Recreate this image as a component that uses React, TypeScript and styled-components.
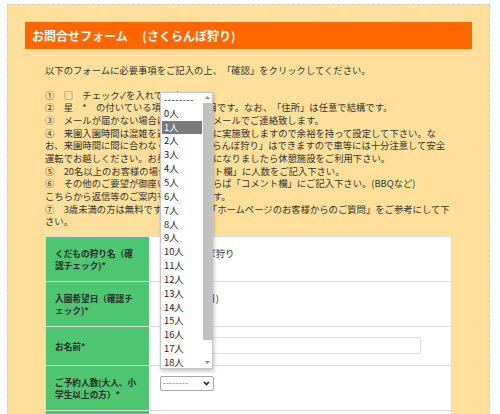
import React from 'react';
import styled, { createGlobalStyle } from 'styled-components';

const GlobalStyle = createGlobalStyle`
  html, body {
    margin: 0;
    padding: 0;
    background: #fff;
  }
  body {
    font-family: "Noto Sans CJK JP", "Noto Sans", sans-serif;
    color: #333;
  }
`;

const Frame = styled.div`
  margin: 4px 10px 0 7px;
  border: 1px dashed #cfcfcf;
  background: #ffe09b;
  padding: 17px 17px 40px;
`;

const Title = styled.h2`
  margin: 0;
  height: 27px;
  display: flex;
  align-items: center;
  padding: 0 7px;
  background: #ff6600;
  color: #fff;
  font-size: 12px;
  font-weight: bold;
  white-space: pre;
`;

const Body = styled.div`
  padding: 0 20px;
  font-size: 9.33px;
  line-height: 12.67px;
  text-spacing-trim: space-all;
`;

const Lead = styled.p`
  margin: 14.6px 0 12.3px;
`;

const Notes = styled.div`
  white-space: pre;
`;

const FormGrid = styled.div`
  margin-top: 8px;
  border: 1px solid #dcdcdc;
  background: #fff;
`;

const Row = styled.div`
  display: grid;
  grid-template-columns: 103px 1fr;
  border-bottom: 1px solid #dcdcdc;
`;

const Label = styled.div`
  display: flex;
  align-items: center;
  padding: 10px 9px;
  background: #4ec571;
  font-size: 8.67px;
  line-height: 12px;
  font-weight: bold;
  color: #2b2b2b;
`;

const Value = styled.div`
  padding: 10px 11px;
  line-height: 12px;
`;

const CheckLabel = styled.label`
  display: flex;
  align-items: center;
  gap: 1px;
`;

const Check = styled.input`
  width: 8px;
  height: 8px;
  margin: 0;
`;

const TextInput = styled.input`
  display: block;
  width: 261px;
  height: 17px;
  margin: 0 0 1px;
  box-sizing: border-box;
  border: 1px solid #e2e2e2;
  background: #fff;
  padding: 0 4px;
`;

const SelectWrap = styled.div`
  position: relative;
  width: 54px;
`;

const SelectBox = styled.div`
  display: flex;
  align-items: center;
  justify-content: space-between;
  height: 15px;
  box-sizing: border-box;
  border: 1px solid #a6a6a6;
  border-radius: 2px;
  background: #fff;
  padding: 0 3px 0 2px;
  font-size: 8px;
  letter-spacing: 0.4px;
  color: #666;
`;

const Listbox = styled.div`
  position: absolute;
  left: 0;
  bottom: calc(100% + 7px);
  z-index: 10;
  width: 53px;
  height: 277px;
  box-sizing: border-box;
  display: flex;
  background: #fff;
  border: 1px solid #c6c6c6;
  box-shadow: 1px 2px 4px rgba(0, 0, 0, 0.25);
`;

const OptionList = styled.ul`
  flex: 1;
  margin: 0;
  padding: 0 0 0 1px;
  list-style: none;
  overflow: hidden;
`;

const Option = styled.li<{ $active?: boolean }>`
  height: 13.85px;
  line-height: 13.85px;
  padding-left: 2px;
  font-size: 9.33px;
  letter-spacing: ${(p) => (p.$active ? '0' : '0')};
  color: ${(p) => (p.$active ? '#fff' : '#222')};
  background: ${(p) => (p.$active ? '#7a7a7a' : 'transparent')};
`;

const Dashes = styled.span`
  letter-spacing: 0.5px;
`;

const Scrollbar = styled.div`
  width: 10px;
  display: flex;
  flex-direction: column;
  align-items: flex-end;
`;

const ScrollArrow = styled.div`
  height: 10px;
  width: 9px;
  display: flex;
  align-items: center;
  justify-content: center;
`;

const Thumb = styled.div`
  width: 9px;
  height: 237px;
  background: #c1c1c1;
`;

const Spacer = styled.div`
  flex: 1;
`;

const Arrow = ({ up }: { up?: boolean }) => (
  <svg width="5" height="3" viewBox="0 0 5 3">
    <polygon points={up ? '0,3 2.5,0 5,3' : '0,0 5,0 2.5,3'} fill="#8a8a8a" />
  </svg>
);

const Chevron = () => (
  <svg width="7" height="5" viewBox="0 0 7 5">
    <polyline points="1,1 3.5,3.5 6,1" fill="none" stroke="#222" strokeWidth="1.6" />
  </svg>
);

const notes = [
  '①　□　チェック✓を入れて下さい。',
  '②　星　*　の付いている項目は必須項目です。なお、「住所」は任意で結構です。',
  '③　メールが届かない場合は、当園よりメールでご連絡致します。',
  '④　来園入園時間は混雑を避ける為順番に実施致しますので余裕を持って設定して下さい。な',
  'お、来園時間に間に合わなくても「さくらんぼ狩り」はできますので車等には十分注意して安全',
  '運転でお越しください。お昼食のお時間になりましたら休憩施設をご利用下さい。',
  '⑤　20名以上のお客様の場合は「コメント欄」に人数をご記入下さい。',
  '⑥　その他のご要望が御座いますようならば「コメント欄」にご記入下さい。(BBQなど)',
  'こちらから返信等のご案内をお送りします。',
  '⑦　3歳未満の方は無料です。詳しくは「ホームページのお客様からのご質問」をご参考にして下',
  'さい。',
];

const options = ['--------', ...Array.from({ length: 21 }, (_, i) => `${i}人`)];

const PeopleSelect = ({ open }: { open?: boolean }) => (
  <SelectWrap>
    <SelectBox>
      <span>--------</span>
      <Chevron />
    </SelectBox>
    {open && (
      <Listbox>
        <OptionList>
          {options.map((o) => (
            <Option key={o} $active={o === '1人'}>
              {o === '--------' ? <Dashes>{o}</Dashes> : o}
            </Option>
          ))}
        </OptionList>
        <Scrollbar>
          <ScrollArrow>
            <Arrow up />
          </ScrollArrow>
          <Thumb />
          <Spacer />
          <ScrollArrow>
            <Arrow />
          </ScrollArrow>
        </Scrollbar>
      </Listbox>
    )}
  </SelectWrap>
);

export default function App() {
  return (
    <>
      <GlobalStyle />
      <Frame>
        <Title>お問合せフォーム　 (さくらんぼ狩り)</Title>
        <Body>
          <Lead>以下のフォームに必要事項をご記入の上、「確認」をクリックしてください。</Lead>
          <Notes>
            {notes.map((n) => (
              <div key={n}>{n}</div>
            ))}
          </Notes>
          <FormGrid>
            <Row>
              <Label>くだもの狩り名（確認チェック)*</Label>
              <Value>
                <CheckLabel>
                  <Check type="checkbox" />
                  さくらんぼ狩り
                </CheckLabel>
              </Value>
            </Row>
            <Row>
              <Label>入園希望日（確認チェック)*</Label>
              <Value>
                <CheckLabel>
                  <Check type="checkbox" />
                  6月15日(日)
                </CheckLabel>
              </Value>
            </Row>
            <Row>
              <Label>お名前*</Label>
              <Value>
                <TextInput type="text" />
              </Value>
            </Row>
            <Row>
              <Label>ご予約人数(大人、小学生以上の方）*</Label>
              <Value>
                <PeopleSelect open />
              </Value>
            </Row>
            <Row>
              <Label>ご予約人数(小学生未満の方）*</Label>
              <Value>
                <PeopleSelect />
              </Value>
            </Row>
          </FormGrid>
        </Body>
      </Frame>
    </>
  );
}
